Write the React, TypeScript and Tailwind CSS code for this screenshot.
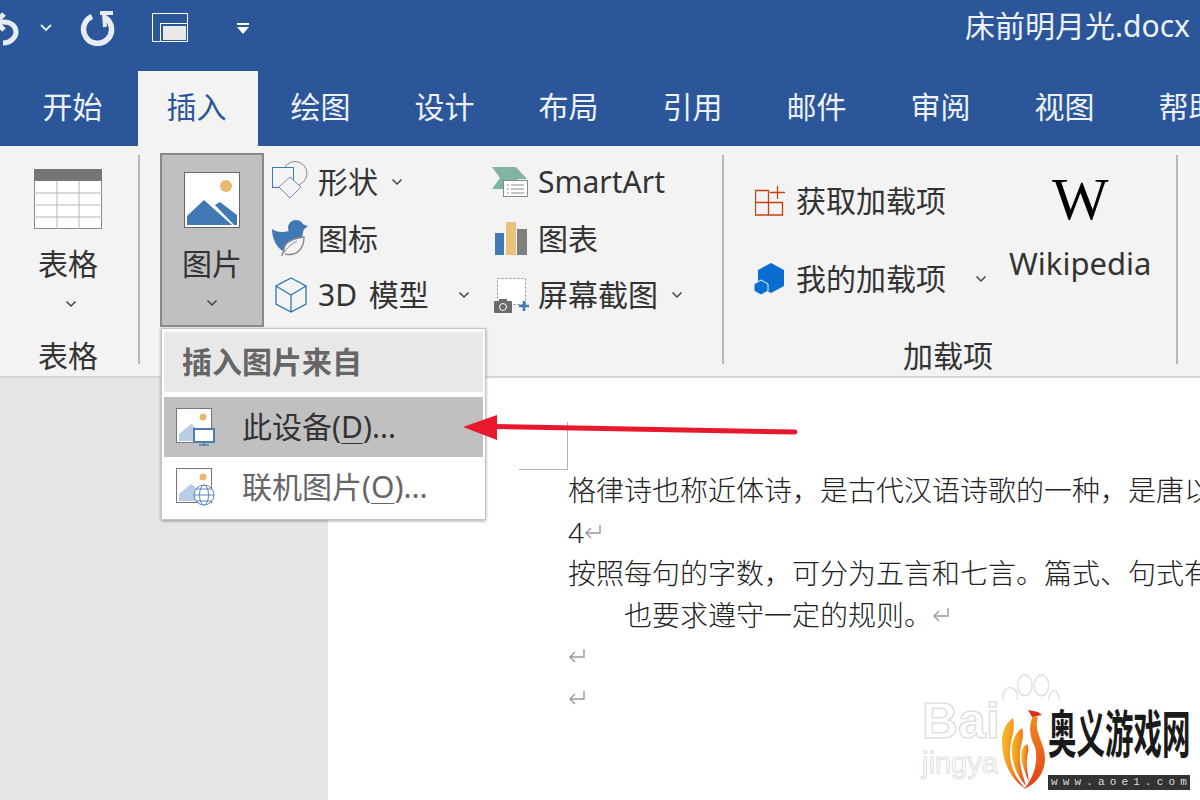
const cjk = "font-['Noto_Sans','Noto_Sans_CJK_SC',sans-serif]";

const tabs = ["开始", "插入", "绘图", "设计", "布局", "引用", "邮件", "审阅", "视图", "帮助"];

function Chevron({ className = "" }: { className?: string }) {
  return (
    <svg width="12" height="8" viewBox="0 0 12 8" className={className} fill="none">
      <path d="M1.5 1.5 6 6l4.5-4.5" stroke="#444" strokeWidth="1.5" />
    </svg>
  );
}

function ReturnMark() {
  return (
    <svg width="18" height="16" viewBox="0 0 18 16" className="inline-block align-[3px]" fill="none">
      <path d="M16 1v8H2M7 4 2 9l5 5" stroke="#9a9a9a" strokeWidth="1.4" />
    </svg>
  );
}

function TableIcon() {
  return (
    <svg width="68" height="60" viewBox="0 0 68 60" fill="none">
      <rect x="0.5" y="0.5" width="67" height="59" fill="#fff" stroke="#8a8a8a" />
      <rect width="68" height="12" fill="#757575" />
      <path d="M0 24h68M0 36h68M0 48h68M23 12v48M45 12v48" stroke="#b5b5b5" />
    </svg>
  );
}

function PictureIcon() {
  return (
    <svg width="56" height="56" viewBox="0 0 56 56" fill="none">
      <rect x="0.5" y="0.5" width="55" height="55" fill="#fff" stroke="#666" />
      <circle cx="42" cy="14" r="6" fill="#e8b96e" />
      <path d="M3 53V44L20 28l28 25z" fill="#4279b5" />
      <path d="M31 33l5-3 17 13v10h-3z" fill="#4279b5" />
    </svg>
  );
}

function ShapesIcon() {
  return (
    <svg width="36" height="38" viewBox="0 0 36 38" className="-mt-[4px]" fill="none">
      <circle cx="23" cy="12.500" r="12" fill="#f3f3f3" stroke="#8a8a8a" />
      <rect x="0.500" y="6.500" width="21" height="20" fill="#f3f3f3" stroke="#4279b5" />
      <path d="M18 16 29 26 18 37 7 26z" fill="#f3f3f3" stroke="#6a8fb8" />
    </svg>
  );
}

function BirdIcon() {
  return (
    <svg width="36" height="38" viewBox="0 0 36 38" className="-mt-[2px]" fill="none">
      <circle cx="24" cy="9" r="8" fill="#4279b5" />
      <path d="M30 5l6 2-5 4z" fill="#4279b5" />
      <path d="M0 10c4 3 10 4 17 2l14 1c0 7-7 12-13 15-3 2-5 4-7 4C5 29 0 20 0 10z" fill="#4279b5" />
      <path d="M10 37c0-2 1-4 2-6 0-7 6-11 20-13 0 9-5 20-19 17" fill="#f3f3f3" stroke="#8a8a8a" strokeWidth="1.400" />
      <path d="M11 35c4-6 8-10 14-13" stroke="#8a8a8a" />
    </svg>
  );
}

function CubeIcon() {
  return (
    <svg width="32" height="36" viewBox="0 0 32 36" className="ml-[3px]" fill="none">
      <path d="M16 1 31 9v18l-15 8-15-8V9zM1 9l15 9 15-9M16 18v17" stroke="#2e75b6" strokeWidth="1.3" />
    </svg>
  );
}

function SmartArtIcon() {
  return (
    <svg width="36" height="30" viewBox="0 0 36 30" fill="none">
      <path d="M0 0h24l11 12H26v10H0l8-11z" fill="#7fb5a1" />
      <rect x="11.5" y="13.5" width="24" height="16" fill="#fff" stroke="#8a8a8a" />
      <path d="M15 18h2M19 18h13M15 22h2M19 22h13M15 26h2M19 26h13" stroke="#8a8a8a" />
    </svg>
  );
}

function ChartIcon() {
  return (
    <svg width="33" height="33" viewBox="0 0 33 33">
      <rect x="0" y="11" width="9" height="22" fill="#4279b5" />
      <rect x="11" y="0" width="10" height="33" fill="#e9c37c" />
      <rect x="22" y="7" width="10" height="26" fill="#7f7f7f" />
    </svg>
  );
}

function ScreenshotIcon() {
  return (
    <svg width="36" height="36" viewBox="0 0 36 36" className="ml-[2px]" fill="none">
      <rect x="3.5" y="1.5" width="28" height="26" fill="#fff" stroke="#8a8a8a" strokeDasharray="2 2" />
      <rect x="0" y="24" width="18" height="12" rx="1" fill="#6b6b6b" />
      <rect x="5" y="22" width="8" height="3" fill="#6b6b6b" />
      <circle cx="9" cy="30" r="3.5" fill="none" stroke="#fff" />
      <path d="M30 24v10M25 29h10" stroke="#4279b5" strokeWidth="2.6" />
    </svg>
  );
}

function StoreIcon() {
  return (
    <svg width="31" height="30" viewBox="0 0 31 30" className="ml-[1px]" fill="none">
      <path d="M0.500 4.500h13v12h-13zM0.500 16.500v12.500h13V16.500M13.500 29h14V16.500h-14M22.500 0v13M15 6.500h15" stroke="#c8400f" strokeWidth="1.300" />
    </svg>
  );
}

function AddinsIcon() {
  return (
    <svg width="30" height="33" viewBox="0 0 30 33">
      <path d="M17 0l13 7v16l-13 7-13-7V7z" fill="#0a6ed1" />
      <path d="M7 17l7 4v7l-7 4-7-4v-7z" fill="#0a6ed1" stroke="#f3f3f3" />
    </svg>
  );
}

function LocalPicture({ globe }: { globe?: boolean }) {
  return (
    <svg width="40" height="38" viewBox="0 0 40 38" fill="none">
      <rect x="0.5" y="0.5" width="35" height="34" fill="#fff" stroke="#777" />
      <circle cx="27" cy="9" r="3.5" fill="#e8b96e" />
      <path d="M3 33v-7l12-10 15 12v5z" fill="#b9cde4" />
      {globe ? (
        <g stroke="#5b86b8" fill="#fff" strokeWidth="1">
          <circle cx="28" cy="27" r="10" />
          <ellipse cx="28" cy="27" rx="4.500" ry="10" />
          <path d="M18 27h20M20 21h16M20 33h16" />
        </g>
      ) : (
        <g>
          <rect x="18" y="21" width="20" height="13" fill="#fff" stroke="#4f7cb0" strokeWidth="2" />
          <path d="M28 34v3M23 37h10" stroke="#4f7cb0" strokeWidth="1.500" />
        </g>
      )}
    </svg>
  );
}

function SmallButton({ icon, label, chevronGap }: { icon: React.ReactNode; label: string; chevronGap?: string }) {
  return (
    <div className="flex h-[56.5px] items-center text-[30px] leading-none text-[#333]">
      <span className="flex w-[46px] items-center">{icon}</span>
      <span className="[word-spacing:4px]">{label}</span>
      {chevronGap && <Chevron className={chevronGap} />}
    </div>
  );
}

function TitleBar() {
  return (
    <div className="flex h-[71px] items-start overflow-hidden">
      <svg width="30" height="40" viewBox="0 0 30 40" className="mt-[8px] shrink-0" fill="none">
        <path d="M-4 14h8c8 0 12 5 12 10s-5 11-13 11" stroke="#e8edf5" strokeWidth="5" />
        <path d="M4 6-4 14l8 8" stroke="#e8edf5" strokeWidth="5" />
      </svg>
      <svg width="14" height="10" viewBox="0 0 14 10" className="ml-[9px] mt-[23px] shrink-0" fill="none">
        <path d="M2 2l5 5 5-5" stroke="#e8edf5" strokeWidth="1.800" />
      </svg>
      <svg width="36" height="36" viewBox="0 0 36 36" className="ml-[27px] mt-[10px] shrink-0" fill="none">
        <path d="M12 6.500a14 14 0 1 0 13 1" stroke="#e8edf5" strokeWidth="5.500" />
        <path d="M20 3h13M24 3l1 14" stroke="#e8edf5" strokeWidth="4" />
      </svg>
      <svg width="37" height="30" viewBox="0 0 37 30" className="ml-[36px] mt-[13px] shrink-0" fill="none">
        <rect x="0.5" y="0.5" width="35" height="28" stroke="#fff" />
        <rect x="8.500" y="10.500" width="27" height="18" stroke="#fff" />
        <rect x="11" y="13" width="23" height="14" fill="#e8e8e8" />
      </svg>
      <svg width="14" height="12" viewBox="0 0 14 12" className="ml-[47px] mt-[23px] shrink-0">
        <path d="M1 0h12v2H1zM1 4h12l-6 7z" fill="#fff" />
      </svg>
      <div className="ml-auto pr-[10px] pt-[4px] text-[30px] leading-[44px] text-[#eef2f8]">床前明月光.docx</div>
    </div>
  );
}

function TabRow() {
  return (
    <div className="flex h-[75px] gap-[4px] pl-[14px]">
      {tabs.map((t) => (
        <div
          key={t}
          className={`flex w-[120px] shrink-0 items-center justify-center pb-[3px] pr-[3px] text-[30px] leading-none ${
            t === "插入" ? "bg-[#f3f3f3] text-[#2b579a]" : "text-[#eef2f8]"
          }`}
        >
          {t}
        </div>
      ))}
    </div>
  );
}

function Separator() {
  return <div className="mb-[12px] mt-[9px] w-[2px] shrink-0 bg-[#b8b8b8]" />;
}

function Ribbon() {
  return (
    <div className="flex h-[232px] border-b-2 border-[#d4d4d4] bg-[#f3f3f3] text-[#333]">
      <div className="flex w-[136px] shrink-0 flex-col items-center pt-[23px] text-[30px] leading-none">
        <TableIcon />
        <div className="mt-[20px] leading-[30px]">表格</div>
        <Chevron className="ml-[6px] mt-[21px]" />
        <div className="mt-[33px] leading-[30px]">表格</div>
      </div>
      <div className="w-[2px]" />
      <Separator />

      <div className="ml-[20px] mt-[7px] flex h-[174px] w-[104px] shrink-0 flex-col items-center border-2 border-[#8a8a8a] bg-[#c0c0c0] pt-[17px] text-[30px] leading-[30px]">
        <PictureIcon />
        <div className="mt-[21px]">图片</div>
        <Chevron className="mt-[20px]" />
      </div>

      <div className="ml-[8px] mt-[8px] w-[220px] shrink-0">
        <SmallButton icon={<ShapesIcon />} label="形状" chevronGap="ml-[13px]" />
        <SmallButton icon={<BirdIcon />} label="图标" />
        <SmallButton icon={<CubeIcon />} label="3D 模型" chevronGap="ml-[29px]" />
      </div>

      <div className="mt-[8px] w-[230px] shrink-0">
        <SmallButton icon={<SmartArtIcon />} label="SmartArt" />
        <SmallButton icon={<span className="ml-[3px]"><ChartIcon /></span>} label="图表" />
        <SmallButton icon={<ScreenshotIcon />} label="屏幕截图" chevronGap="ml-[13px]" />
      </div>

      <Separator />

      <div className="flex w-[452px] shrink-0 flex-col">
        <div className="flex h-[190px]">
          <div className="ml-[30px] mt-[16px] w-[255px] shrink-0 text-[30px] leading-none">
            <div className="flex h-[78px] items-center">
              <span className="flex w-[42px]"><StoreIcon /></span>
              <span>获取加载项</span>
            </div>
            <div className="flex h-[78px] items-center">
              <span className="flex w-[42px]"><AddinsIcon /></span>
              <span>我的加载项</span>
              <Chevron className="ml-[29px]" />
            </div>
          </div>
          <div className="flex flex-col items-center pt-[23px]">
            <div className="font-['Liberation_Serif',serif] text-[60px] leading-[60px] text-black">W</div>
            <div className="mt-[16px] text-[31px] leading-[36px]">Wikipedia</div>
          </div>
        </div>
        <div className="mt-[5px] pr-[4px] text-center text-[30px] leading-[30px]">加载项</div>
      </div>

      <Separator />
    </div>
  );
}

function PictureMenu() {
  return (
    <div className="absolute left-[161px] top-[328px] flex h-[192px] w-[325px] flex-col border border-[#c4c4c4] bg-white p-[2px] pt-[3px] shadow-[0_1px_3px_rgba(0,0,0,0.35)]">
      <div className="flex h-[60px] items-center bg-[#e8e8e8] pl-[18px] text-[30px] font-bold leading-none text-[#666]">
        插入图片来自
      </div>
      <div className="mt-[5px] flex h-[60px] items-center bg-[#c0c0c0] pl-[12px] text-[30px] leading-none text-[#333]">
        <span className="flex w-[66px]"><LocalPicture /></span>
        <span>此设备(<span className="underline decoration-1 underline-offset-[5px]">D</span>)...</span>
      </div>
      <div className="flex h-[60px] items-center pl-[12px] text-[30px] leading-none text-[#666]">
        <span className="flex w-[66px]"><LocalPicture globe /></span>
        <span>联机图片(<span className="underline decoration-1 underline-offset-[5px]">O</span>)...</span>
      </div>
    </div>
  );
}

function DocumentArea() {
  return (
    <div className="flex flex-1">
      <div className="w-[328px] shrink-0 bg-[#e6e6e6]" />
      <div className="flex-1 overflow-hidden bg-white pl-[240px] pt-[92px] text-[28px] font-light leading-[41.500px] text-[#222]">
        <div className="h-[41.500px] whitespace-nowrap">格律诗也称近体诗，是古代汉语诗歌的一种，是唐以</div>
        <div className="h-[41.500px]">4<ReturnMark /></div>
        <div className="h-[41.500px] whitespace-nowrap">按照每句的字数，可分为五言和七言。篇式、句式有</div>
        <div className="h-[41.500px] whitespace-nowrap pl-[56px]">也要求遵守一定的规则。<ReturnMark /></div>
        <div className="h-[41.500px]"><ReturnMark /></div>
        <div className="h-[41.500px]"><ReturnMark /></div>
      </div>
    </div>
  );
}

function Watermark() {
  return (
    <>
      <div className="absolute left-[920px] top-[672px] h-[128px] w-[90px] text-white">
        <svg width="66" height="52" viewBox="0 0 60 50" className="absolute left-[76px] top-[2px]" fill="none" stroke="#e2e2e2" strokeWidth="1.500">
          <ellipse cx="12" cy="22" rx="7" ry="9" />
          <ellipse cx="26" cy="11" rx="7" ry="10" />
          <ellipse cx="42" cy="11" rx="7" ry="10" />
          <ellipse cx="54" cy="25" rx="5" ry="9" />
        </svg>
        <div className="absolute left-[2px] top-[24px] font-['Liberation_Sans',sans-serif] text-[50px] font-bold leading-[50px] [-webkit-text-stroke:1.500px_#dedede]">Bai</div>
        <div className="absolute left-[2px] top-[76px] font-['Liberation_Sans',sans-serif] text-[29px] leading-[30px] [-webkit-text-stroke:1px_#dedede]">jingya</div>
      </div>
      <div className="absolute left-[1000px] top-[700px] flex h-[100px] w-[200px] bg-white">
        <svg width="44" height="84" viewBox="0 0 44 84" className="ml-[2px] mt-[9px] shrink-0" fill="none">
          <defs>
            <linearGradient id="fl" x1="0" y1="0" x2="1" y2="0.300">
              <stop offset="0" stopColor="#f7c52c" />
              <stop offset="0.600" stopColor="#f08a1d" />
              <stop offset="1" stopColor="#e8401c" />
            </linearGradient>
            <linearGradient id="fr" x1="0" y1="0" x2="0" y2="1">
              <stop offset="0" stopColor="#f08a1d" />
              <stop offset="1" stopColor="#e63e1a" />
            </linearGradient>
          </defs>
          <path d="M11 9C4 14 0 22 0 32c0 22 10 40 24 48C14 70 8 58 8 44 8 30 14 22 11 9z" fill="url(#fl)" />
          <path d="M20 19c-7 5-11 14-10 26 1 13 7 24 14 32-3-10-7-20-6-32 0-10 5-16 2-26z" fill="url(#fl)" />
          <path d="M25 35c-5 3-7 10-5 18 2 8 4 14 7 20-1-8-3-15-2-23 0-6 3-9 0-15z" fill="url(#fl)" />
          <path d="M31 7c-5 11-3 21 2 31 3 12 1 28-11 42 14-6 21-18 21-30C43 32 31 24 36 8z" fill="url(#fr)" />
          <path d="M26 1l10 2 4 3-10 2z" fill="#d8321a" />
        </svg>
        <div className="ml-[2px] flex w-[142px] flex-col">
          <div className="mt-[6px] h-[56px] origin-top scale-y-[1.800] whitespace-nowrap text-[28.500px] font-bold leading-[30px] text-[#1a1a1a]">奥义游戏网</div>
          <div className="mt-[13px] flex h-[15px] items-center justify-between bg-[#333] px-[3px] font-['Liberation_Mono',monospace] text-[11px] leading-none text-[#ddd]">
            {"www.aoe1.com".split("").map((c, i) => (
              <span key={i}>{c}</span>
            ))}
          </div>
        </div>
      </div>
    </>
  );
}

export default function App() {
  return (
    <div className={`relative flex h-[800px] w-[1200px] flex-col overflow-hidden bg-white ${cjk}`}>
      <div className="bg-[#2b579a]">
        <TitleBar />
        <TabRow />
      </div>
      <Ribbon />
      <DocumentArea />

      <PictureMenu />

      {/* page corner mark */}
      <div className="absolute left-[519px] top-[422px] h-[48px] w-[49px] border-b border-r border-[#b4b4b4]" />

      {/* annotation arrow */}
      <svg width="350" height="40" viewBox="0 0 350 40" className="absolute left-[460px] top-[410px]" fill="none">
        <path d="M30 16.500 335 22" stroke="#e8192c" strokeWidth="5" strokeLinecap="round" />
        <path d="M3 17 37 5v25z" fill="#e8192c" />
      </svg>

      <Watermark />
    </div>
  );
}
